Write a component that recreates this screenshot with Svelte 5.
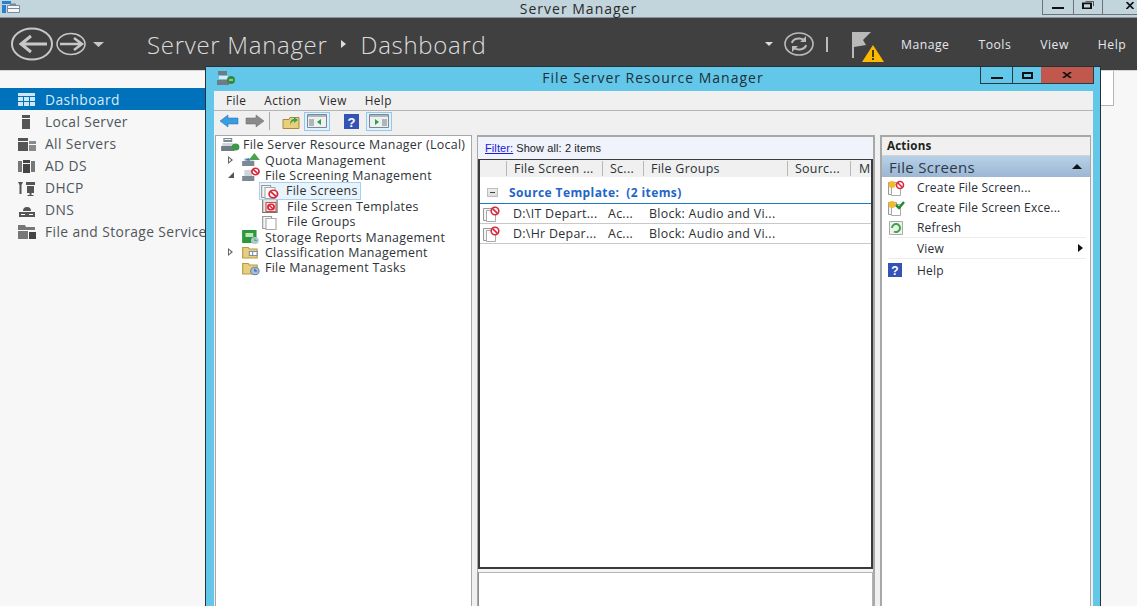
<script>
  const nav = [
    { label: 'Dashboard', icon: 'dash', active: true },
    { label: 'Local Server', icon: 'local' },
    { label: 'All Servers', icon: 'all' },
    { label: 'AD DS', icon: 'adds' },
    { label: 'DHCP', icon: 'dhcp' },
    { label: 'DNS', icon: 'dns' },
    { label: 'File and Storage Services', icon: 'files' }
  ];
  const topMenu = ['Manage', 'Tools', 'View', 'Help'];
  const cols = [
    { label: '', w: 27 },
    { label: 'File Screen ...', w: 96 },
    { label: 'Sc...', w: 41 },
    { label: 'File Groups', w: 144 },
    { label: 'Sourc...', w: 63 },
    { label: 'M', w: 22 }
  ];
  const rows = [
    { a: 'D:\\IT Depart...', b: 'Ac...', c: 'Block: Audio and Vi...' },
    { a: 'D:\\Hr Depar...', b: 'Ac...', c: 'Block: Audio and Vi...' }
  ];
</script>

{#snippet navIcon(k)}
  <svg class="navicon" viewBox="0 0 20 16" width="20" height="16">
    {#if k === 'dash'}
      <path fill="#cfe6f6" d="M1 1h17v3H1zM1 5h5v4H1zM7 5h5v4H7zM13 5h5v4h-5zM1 10h5v4H1zM7 10h5v4H7zM13 10h5v4h-5z" />
    {:else if k === 'local'}
      <path fill="#555" d="M5 1h8v3H5zM5 5h8v10H5z" />
    {:else if k === 'all'}
      <path fill="#555" d="M1 2h10v3H1zM1 6h10v9H1z" /><path fill="#8a8a8a" d="M12 5h7v3h-7zM12 9h7v6h-7z" />
    {:else if k === 'adds'}
      <path fill="#777" d="M1 3h4v11H1zM14 3h4v11h-4z" /><path fill="#444" d="M6 2h7v3H6zM6 6h7v9H6z" />
    {:else if k === 'dhcp'}
      <path fill="#555" d="M1 2h5l-1.500 3v9h-2V5zM9 2h9v3H9zM10 6h7v7h-7zM12.500 13h2v2h2v1h-6v-1h2z" />
    {:else if k === 'dns'}
      <path fill="#555" d="M2 10h16v5H2zM6 9a4 4 0 1 1 8 0z" /><path fill="#fff" d="M4 12h4v1H4zM12 12h4v1h-4z" />
    {:else}
      <path fill="#777" d="M1 1h7l1 2h9v3H1z" /><path fill="#777" d="M1 7h10v8H1z" /><path fill="#444" d="M12 8h7v7h-7z" />
    {/if}
  </svg>
{/snippet}

{#snippet blockBadge(x, y, r)}
  <circle cx={x} cy={y} {r} fill="#fff" stroke="#d8283a" stroke-width="1.600" />
  <path d="M{x - r * 0.7} {y - r * 0.7}L{x + r * 0.7} {y + r * 0.7}" stroke="#d8283a" stroke-width="1.600" />
{/snippet}

{#snippet pages()}
  <path d="M1.500 2.500h8v12h-8z" fill="#f4f4f4" stroke="#999" />
  <path d="M4.500 4.500h9v11h-9z" fill="#fff" stroke="#aaa" />
{/snippet}

{#snippet treeIcon(k)}
  <svg class="ti" viewBox="0 0 18 16" width="20" height="16" preserveAspectRatio="none">
    {#if k === 'root'}
      <path fill="#7d8a94" d="M3 1h8v4H3z" /><path fill="#e8edf0" d="M4 2h6v1H4z" /><path fill="#6f7b85" d="M1 9h12v5H1z" /><path fill="#cfd6db" d="M2 6h10v3H2z" /><circle cx="14" cy="10" r="3.500" fill="#3b9a48" />
    {:else if k === 'quota'}
      <path fill="#7d8a94" d="M1 9h11v5H1z" /><path fill="#cfd6db" d="M3 6h8v3H3z" /><path fill="#4aa24f" d="M12 1l5 7H7z" /><path fill="#3f78b8" d="M3 8l4-2 1 3z" />
    {:else if k === 'screen'}
      <path fill="#7d8a94" d="M1 9h11v5H1z" /><path fill="#cfd6db" d="M3 3h7v6H3z" />
      {@render blockBadge(13, 4.500, 3.200)}
    {:else if k === 'screens'}
      {@render pages()}
      {@render blockBadge(12, 11, 3.800)}
    {:else if k === 'templates'}
      <path d="M1.500 1.500h13v13h-13z" fill="#e6e6e6" stroke="#777" /><path d="M4.500 4.500h9v9h-9z" fill="#fbe4e4" stroke="#b55" />
      {@render blockBadge(9, 9, 2.800)}
    {:else if k === 'groups'}
      {@render pages()}
    {:else if k === 'reports'}
      <path fill="#2c9a3a" d="M1 1h13v13H1z" /><path fill="#bfe6b8" d="M4 4h7v4H4z" /><circle cx="12.500" cy="11.500" r="3.500" fill="#b8c4d4" /><path d="M12.500 9.500v2h2" stroke="#2c5" fill="none" />
    {:else if k === 'class'}
      <path fill="#e7cf7e" stroke="#b89a45" d="M1.500 3.500h5l1 1.500h7v9h-13z" /><path fill="#7d8fa8" d="M7 7h8v5H7z" /><path fill="#fff" d="M8 8h2v3H8zM11 8h3v3h-3z" />
    {:else}
      <path fill="#e7cf7e" stroke="#b89a45" d="M1.500 3.500h5l1 1.500h7v9h-13z" /><circle cx="12.500" cy="11" r="3.800" fill="#a9bdd6" stroke="#6b86a8" /><path d="M12.500 8.800v2.200h2" stroke="#2c5f9e" fill="none" />
    {/if}
  </svg>
{/snippet}

{#snippet fileBlock()}
  <svg viewBox="0 0 20 16" width="20" height="16">
    {@render pages()}
    {@render blockBadge(13, 5, 3.800)}
  </svg>
{/snippet}

<div class="desktop">
  <header class="wintitle">
    <svg class="appicon" viewBox="0 0 20 14" width="20" height="14">
      <path fill="#2b7fd0" d="M1 1h9v3H1zM1 5h4v8H1z" />
      <path fill="#f4f7f9" stroke="#7b8a96" d="M6.500 5.500h12v7h-12z" />
      <path fill="#7b8a96" d="M9 3.500h6v2H9zM6 8h13v1H6z" />
    </svg>
    <span class="wintitle-text">Server Manager</span>
    <div class="wincontrols">
      <span class="wc w1"><i class="min"></i></span>
      <span class="wc w2"><svg viewBox="0 0 12 10" width="12" height="8" preserveAspectRatio="none"><path d="M3.500.500h8v6" fill="none" stroke="#444" /><path d="M1 3h8v6H1z" fill="none" stroke="#111" stroke-width="2" /></svg></span>
      <span class="wc w3"><svg viewBox="0 0 10 8" width="10" height="7"><path d="M1 0l8 8M9 0L1 8" stroke="#111" stroke-width="2" /></svg></span>
    </div>
  </header>

  <div class="darkbar">
    <svg class="navarrows" viewBox="0 0 106 40" width="106" height="40">
      <g fill="none" stroke="#c8c8c8">
        <ellipse cx="21" cy="20" rx="20" ry="15.500" stroke-width="2" />
        <path d="M36 20H10M20 12l-10 8 10 8" stroke-width="3" />
        <ellipse cx="60" cy="20" rx="14" ry="10.500" stroke-width="1.500" />
        <path d="M49 20h21M63 14l8 6-8 6" stroke-width="2.500" />
      </g>
      <path fill="#c8c8c8" d="M82 18h11l-5.500 5z" />
    </svg>
    <div class="crumb"><span>Server Manager</span><i class="crumbarrow"></i><span>Dashboard</span></div>
    <div class="spacer"></div>
    <i class="drop"></i>
    <svg class="refresh" viewBox="0 0 30 24" width="30" height="24">
      <ellipse cx="15" cy="12" rx="14" ry="11" fill="none" stroke="#bbb" stroke-width="1.600" />
      <path d="M8 11a7 5 0 0 1 12-3M22 13a7 5 0 0 1-12 3" fill="none" stroke="#bbb" stroke-width="2" />
      <path fill="#bbb" d="M22 4v6h-6zM8 20v-6h6z" />
    </svg>
    <i class="pipe"></i>
    <svg class="flag" viewBox="0 0 32 30" width="32" height="30">
      <path fill="#b9b9b9" d="M0 0h2v26H0zM2 0h17l-8 8 3 5-12 2z" />
      <path fill="#fbb900" d="M21 13l11 17H10z" />
      <path fill="#4a3a00" d="M20 18h2v7h-2zM20 26h2v2h-2z" />
    </svg>
    <nav class="topmenu">
      {#each topMenu as m}<span>{m}</span>{/each}
    </nav>
  </div>

  <div class="body">
    <aside class="side">
      <ul>
        {#each nav as n}
          <li class:active={n.active}>{@render navIcon(n.icon)}<span>{n.label}</span></li>
        {/each}
      </ul>
    </aside>
    <main class="content"><div class="tile"></div></main>
  </div>

  <section class="fsrm">
    <div class="fs-title">
      <svg class="fs-icon" viewBox="0 0 20 16" width="20" height="16">
        <path fill="#6f7b85" d="M2 1h9v4H2zM1 10h12v5H1z" /><path fill="#e2e7ea" d="M3 6h9v3H3z" /><circle cx="15" cy="10" r="4" fill="#37883f" /><path d="M13 10h4" stroke="#dff" />
      </svg>
      <span class="fs-title-text">File Server Resource Manager</span>
      <div class="fs-ctl">
        <span class="c1"><i class="min"></i></span>
        <span class="c2"><i class="max"></i></span>
        <span class="c3"><svg viewBox="0 0 10 8" width="10" height="6" preserveAspectRatio="none"><path d="M1 0l8 8M9 0L1 8" stroke="#111" stroke-width="2" /></svg></span>
      </div>
    </div>

    <div class="fs-inner">
      <div class="menubar">
        <span>File</span><span>Action</span><span>View</span><span>Help</span>
      </div>
      <div class="toolbar">
        <svg class="tb" viewBox="0 0 20 14" width="20" height="14"><path fill="#3a9be0" stroke="#1f6fb0" stroke-width=".5" d="M1 7l8-6v3h10v6H9v3z" /></svg>
        <svg class="tb" viewBox="0 0 20 14" width="20" height="14"><path fill="#8a8a8a" stroke="#666" stroke-width=".5" d="M19 7l-8-6v3H1v6h10v3z" /></svg>
        <i class="tbsep"></i>
        <svg class="tb up" viewBox="0 0 18 15" width="18" height="15"><path fill="#e9cf7c" stroke="#a98a3b" d="M1 5.500h6l1-2h9v11H1z" /><path fill="#3aa24a" d="M8 11c0-4 2-6 4-6V3l4 3-4 3V7c-1 0-3 1-4 4z" /></svg>
        <span class="tbtn"><svg viewBox="0 0 20 14" width="20" height="14"><path fill="#eef1f3" stroke="#7d8790" d="M.500 .500h19v13H.500z" /><path fill="#aeb6bc" d="M1 1h18v2H1zM2 5h5v7H2z" /><path fill="#2f9e44" d="M14 5v6l-4-3z" /></svg></span>
        <svg class="tb help" viewBox="0 0 15 15" width="15" height="15"><path fill="#3553b5" d="M0 0h15v15H0z" /><text x="7.500" y="12.500" text-anchor="middle" fill="#fff" font-size="13" font-family="Liberation Sans" font-weight="700">?</text></svg>
        <span class="tbtn"><svg viewBox="0 0 20 14" width="20" height="14"><path fill="#eef1f3" stroke="#7d8790" d="M.500 .500h19v13H.500z" /><path fill="#aeb6bc" d="M1 1h18v2H1zM13 5h5v7h-5z" /><path fill="#2f9e44" d="M6 5v6l4-3z" /></svg></span>
      </div>

      <div class="panes">
        <div class="tree">
          <div class="tn l0">{@render treeIcon('root')}<span>File Server Resource Manager (Local)</span></div>
          <div class="tn l1"><i class="exp closed"></i>{@render treeIcon('quota')}<span>Quota Management</span></div>
          <div class="tn l1"><i class="exp open"></i>{@render treeIcon('screen')}<span>File Screening Management</span></div>
          <div class="tn l2 sel">{@render treeIcon('screens')}<span>File Screens</span></div>
          <div class="tn l2">{@render treeIcon('templates')}<span>File Screen Templates</span></div>
          <div class="tn l2">{@render treeIcon('groups')}<span>File Groups</span></div>
          <div class="tn l1"><i class="exp none"></i>{@render treeIcon('reports')}<span>Storage Reports Management</span></div>
          <div class="tn l1"><i class="exp closed"></i>{@render treeIcon('class')}<span>Classification Management</span></div>
          <div class="tn l1"><i class="exp none"></i>{@render treeIcon('tasks')}<span>File Management Tasks</span></div>
        </div>

        <div class="center">
          <div class="filter"><a href="#top">Filter:</a> <span>Show all: 2 items</span></div>
          <div class="list">
            <div class="thead">
              {#each cols as c}<span class="th" style="width:{c.w}px">{c.label}</span>{/each}
            </div>
            <div class="group"><i class="minus"></i><span>Source Template:&nbsp; (2 items)</span></div>
            {#each rows as r}
              <div class="row">
                <span class="c-ico">{@render fileBlock()}</span>
                <span class="c-a">{r.a}</span>
                <span class="c-b">{r.b}</span>
                <span class="c-c">{r.c}</span>
              </div>
            {/each}
          </div>
          <div class="detail"></div>
        </div>

        <div class="actions">
          <div class="act-head">Actions</div>
          <div class="act-sec"><span>File Screens</span><i class="caret"></i></div>
          <ul>
            <li>
              <svg viewBox="0 0 18 16" width="18" height="16">
                {@render pages()}
                <circle cx="5" cy="4.500" r="3.500" fill="#f5b82e" />
                {@render blockBadge(13, 5, 3.500)}
              </svg>
              <span>Create File Screen...</span>
            </li>
            <li>
              <svg viewBox="0 0 18 16" width="18" height="16">
                {@render pages()}
                <circle cx="5" cy="4.500" r="3.500" fill="#f5b82e" />
                <path d="M9 5l3 3 5-6" stroke="#1e8a2c" stroke-width="2.500" fill="none" />
              </svg>
              <span>Create File Screen Exce...</span>
            </li>
            <li class="ruled">
              <svg viewBox="0 0 18 16" width="18" height="16">
                <path d="M2.500 1.500h13v13h-13z" fill="#eef3ee" stroke="#aaa" />
                <path d="M5 8a4 4 0 1 1 2 3.500" stroke="#39a845" stroke-width="2" fill="none" />
              </svg>
              <span>Refresh</span>
            </li>
            <li class="ruled"><span class="blank"></span><span>View</span><i class="subarrow"></i></li>
            <li>
              <svg viewBox="0 0 18 16" width="18" height="16"><path fill="#3553b5" d="M1 1h14v14H1z" /><text x="8" y="13" text-anchor="middle" fill="#fff" font-size="12" font-family="Liberation Sans" font-weight="700">?</text></svg>
              <span>Help</span>
            </li>
          </ul>
        </div>
      </div>
    </div>
  </section>
</div>

<style>
  :global(body) { margin: 0; background: #f7f7f7; }
  ul { list-style: none; margin: 0; padding: 0; }
  i { display: block; }

  .desktop {
    position: relative;
    width: 1137px;
    height: 606px;
    overflow: hidden;
    display: flex;
    flex-direction: column;
    font-family: "Open Sans", "Noto Sans", sans-serif;
    font-size: 12.400px;
    letter-spacing: .3px;
    color: #333;
    background: #f7f7f7;
  }

  .wintitle {
    flex: 0 0 17px;
    height: 17px;
    background: #c2d5dc;
    border-bottom: 1px solid #8b9599;
    display: flex;
    align-items: center;
    justify-content: center;
    position: relative;
  }
  .appicon { position: absolute; left: 1px; top: 0; }
  .wintitle-text { font-size: 14px; letter-spacing: 1px; color: #2a2a2a; margin-left: 20px; }
  .wincontrols {
    position: absolute;
    right: 0;
    top: 0;
    display: flex;
    height: 14px;
    border-bottom: 1px solid #6c7478;
    border-left: 1px solid #6c7478;
  }
  .wc {
    display: flex;
    align-items: center;
    justify-content: center;
    box-sizing: border-box;
    border-right: 1px solid #6c7478;
    height: 14px;
  }
  .w1 { width: 31px; }
  .w2 { width: 29px; }
  .w3 { width: 34px; border-right: 0; justify-content: flex-end; padding-right: 2px; padding-bottom: 4px; }
  .w2 svg { margin-bottom: 4px; }
  .min { width: 12px; height: 2px; background: #111; margin-top: 1px; }

  .darkbar {
    flex: 0 0 52px;
    background: #404040;
    display: flex;
    align-items: center;
    position: relative;
    color: #e6e6e6;
    box-sizing: border-box;
    padding-left: 11px;
  }
  .navarrows { flex: none; }
  .crumb {
    display: flex;
    align-items: center;
    margin-left: 30px;
    font-size: 24px;
    letter-spacing: .7px;
    color: #dcdcdc;
    font-weight: 300;
  }
  .crumbarrow {
    width: 0;
    height: 0;
    border-left: 5px solid #ddd;
    border-top: 4px solid transparent;
    border-bottom: 4px solid transparent;
    margin: 0 15px 0 13px;
  }
  .spacer { flex: 1; }
  .drop {
    width: 0;
    height: 0;
    border-top: 4px solid #ddd;
    border-left: 4px solid transparent;
    border-right: 4px solid transparent;
    margin-right: 11px;
  }
  .refresh { flex: none; }
  .pipe { width: 2px; height: 15px; background: #bbb; margin: 0 24px 0 12px; }
  .flag { flex: none; margin-top: 6px; }
  .topmenu {
    display: flex;
    font-size: 12.200px;
    letter-spacing: .5px;
    color: #e4e8ee;
    margin-left: 17px;
    width: 236px;
    flex: none;
    gap: 29px;
  }

  .body { flex: 1; display: flex; min-height: 0; }
  .side { width: 206px; background: #f7f7f7; padding-top: 17px; border-top: 1px solid #d5d5d5; flex: none; overflow: hidden; }
  .side li {
    height: 22px;
    box-sizing: border-box;
    padding-top: 1px;
    display: flex;
    align-items: center;
    gap: 8px;
    padding-left: 17px;
    white-space: nowrap;
    color: #50565c;
    font-size: 13.800px;
    letter-spacing: .4px;
  }
  .side li.active { background: #0072bc; color: #d6eaf6; }
  .navicon { flex: none; }
  .content { flex: 1; position: relative; border-top: 1px solid #d5d5d5; }
  .tile { position: absolute; left: 895px; top: 0; width: 12px; height: 34px; background: #fff; border-right: 1px solid #b5b5b5; border-bottom: 1px solid #b5b5b5; }

  .fsrm {
    position: absolute;
    left: 205px;
    top: 66px;
    width: 896px;
    height: 560px;
    box-sizing: border-box;
    background: #63c7ea;
    border: 1px solid #25323a;
    border-bottom: 0;
    display: flex;
    flex-direction: column;
  }
  .fs-title {
    flex: 0 0 24px;
    display: flex;
    align-items: center;
    justify-content: center;
    position: relative;
  }
  .fs-icon { position: absolute; left: 10px; top: 3px; }
  .fs-title-text { font-size: 14px; letter-spacing: 1px; color: #1f2f38; margin-top: -3px; }
  .fs-ctl {
    position: absolute;
    right: 6px;
    top: 0;
    height: 16px;
    display: flex;
    border: 1px solid #2b3a42;
    border-top: 0;
  }
  .fs-ctl span { display: flex; align-items: center; justify-content: center; height: 16px; }
  .fs-ctl .min { margin-top: 5px; }
  .c1 { width: 31px; border-right: 1px solid #2b3a42; }
  .c2 { width: 28px; }
  .c3 { width: 52px; background: #c0584e; }
  .max { width: 7px; height: 3px; border: 2px solid #111; }

  .fs-inner {
    flex: 1;
    margin: 0 7px 0 8px;
    background: #f0f0f0;
    display: flex;
    flex-direction: column;
    min-height: 0;
    color: #2b2b2b;
  }
  .menubar {
    flex: 0 0 20px;
    display: flex;
    align-items: center;
    gap: 18px;
    padding-left: 12px;
    padding-bottom: 2px;
    box-sizing: border-box;
    border-bottom: 1px solid #b4b4b4;
    font-size: 11.800px;
    letter-spacing: .4px;
  }
  .toolbar {
    flex: 0 0 24px;
    box-sizing: border-box;
    padding-bottom: 4px;
    display: flex;
    align-items: center;
    padding-left: 5px;
  }
  .tb { flex: none; }
  .tb + .tb { margin-left: 6px; }
  .tbsep { width: 1px; height: 18px; background: #a9a9a9; margin: 0 12px 0 4px; }
  .up { margin-left: 0; }
  .tbtn {
    width: 24px;
    height: 17px;
    border: 1px solid #90c8f0;
    background: #e3f1fb;
    display: flex;
    align-items: center;
    justify-content: center;
    margin-left: 4px;
  }
  .tb.help { margin-left: 14px; }
  .tb.help + .tbtn { margin-left: 7px; }

  .panes { flex: 1; display: flex; min-height: 0; padding-left: 1px; }
  .tree {
    width: 257px;
    flex: none;
    background: #fff;
    border: 1px solid #a8a8a8;
    border-bottom: 0;
    box-sizing: border-box;
    padding-top: 1px;
    color: #2e3338;
  }
  .tn { height: 15.400px; display: flex; align-items: center; white-space: nowrap; }
  .ti { flex: none; margin-right: 4px; }
  .l0 { padding-left: 4px; }
  .l0 .ti { margin-right: 3px; }
  .l1 { padding-left: 12px; }
  .l2 { padding-left: 45px; }
  .l2 .ti { margin-right: 6px; }
  .tn.sel {
    width: fit-content;
    padding: 0 2px 0 0;
    margin-left: 44px;
    outline: 1px solid #a9d0ee;
    background: #e9f3fb;
  }
  .exp { width: 12px; height: 8px; margin-right: 1px; flex: none; position: relative; }
  .closed::before {
    content: "";
    position: absolute;
    left: 0;
    top: 0;
    border-left: 5px solid #666;
    border-top: 4px solid transparent;
    border-bottom: 4px solid transparent;
  }
  .closed::after {
    content: "";
    position: absolute;
    left: 1px;
    top: 2px;
    border-left: 2.500px solid #fff;
    border-top: 2px solid transparent;
    border-bottom: 2px solid transparent;
  }
  .open::before {
    content: "";
    position: absolute;
    left: 0;
    top: 1px;
    border-right: 6px solid #555;
    border-top: 6px solid transparent;
  }

  .center {
    width: 398px;
    margin-left: 5px;
    flex: none;
    display: flex;
    flex-direction: column;
    min-height: 0;
    border: 1px solid #a8a8a8;
    border-bottom: 0;
    border-right-width: 2px;
    box-sizing: border-box;
    background: #f4f4f4;
  }
  .filter {
    flex: 0 0 23px;
    background: #f0f3fb;
    display: flex;
    align-items: center;
    padding-left: 7px;
    gap: 3px;
    font-family: "Liberation Sans", sans-serif;
    font-size: 11px;
    letter-spacing: .1px;
    color: #222;
    box-sizing: border-box;
    border-top: 1px solid #a8a8a8;
  }
  .filter a { color: #1a1ae0; text-decoration: underline; }
  .list {
    flex: 0 0 410px;
    box-sizing: border-box;
    background: #fff;
    border: 1px solid #3a3a3a;
    border-right-width: 2px;
    border-left-width: 2px;
    border-bottom-width: 2px;
    color: #2b3036;
  }
  .thead { height: 17px; display: flex; background: #f0f0f0; }
  .th {
    flex: none;
    box-sizing: border-box;
    border-right: 1px solid #b8b8b8;
    padding-left: 7px;
    white-space: nowrap;
    line-height: 15px;
    margin: 1px 0;
  }
  .th:last-child { border-right: 0; padding-left: 8px; }
  .group {
    height: 27px;
    display: flex;
    align-items: center;
    color: #1e66c8;
    font-weight: 700;
    border-bottom: 1px solid #1e78c8;
    font-size: 12px;
    letter-spacing: .4px;
    padding-top: 4px;
    box-sizing: border-box;
  }
  .minus {
    width: 9px;
    height: 7px;
    border: 1px solid #bdbdbd;
    background: linear-gradient(#eee, #ddd);
    margin: 0 11px 0 7px;
    position: relative;
  }
  .minus::after { content: ""; position: absolute; left: 2px; right: 2px; top: 3px; height: 1px; background: #444; }
  .row {
    height: 20px;
    box-sizing: border-box;
    display: flex;
    align-items: center;
    border-bottom: 1px solid #c8c8c8;
    white-space: nowrap;
  }
  .c-ico { width: 33px; display: flex; padding-left: 2px; box-sizing: border-box; flex: none; }
  .c-a { width: 95px; flex: none; }
  .c-b { width: 41px; flex: none; }
  .c-c { flex: none; }
  .detail {
    flex: 1;
    margin: 3px 0 0 0;
    background: #fff;
    border: 1px solid #b4b4b4;
    border-bottom: 0;
    border-left-color: #8a8a8a;
  }

  .actions {
    flex: 1;
    margin: 0 2px 0 5px;
    background: #fff;
    border: 1px solid #a8a8a8;
    border-width: 2px 1px 0 2px;
    min-width: 0;
    color: #2b3036;
    font-size: 12px;
    letter-spacing: .2px;
  }
  .act-head {
    height: 18px;
    box-sizing: content-box;
    background: #f0f0f0;
    font-weight: 700;
    font-size: 11.600px;
    color: #222;
    padding-left: 5px;
    line-height: 17px;
    border-bottom: 1px solid #d2d2d2;
  }
  .act-sec {
    height: 21px;
    background: linear-gradient(#b6d1e8, #9db6d3);
    display: flex;
    align-items: center;
    justify-content: space-between;
    padding: 0 8px 0 7px;
    font-size: 15px;
    letter-spacing: .3px;
    color: #2c3a48;
  }
  .caret { width: 0; height: 0; border-bottom: 5px solid #111; border-left: 5px solid transparent; border-right: 5px solid transparent; }
  .actions li {
    height: 20px;
    margin: 0 4px 0 6px;
    padding-top: 1px;
    box-sizing: border-box;
    display: flex;
    align-items: center;
    gap: 12px;
    white-space: nowrap;
    position: relative;
  }
  .actions li svg { flex: none; margin-left: -1px; }
  .actions li.ruled { border-bottom: 1px solid #ececec; height: 21px; }
  .actions li:last-child { height: 21px; }
  .blank { width: 17px; flex: none; }
  .subarrow {
    position: absolute;
    right: 3px;
    top: 6px;
    border-left: 5px solid #111;
    border-top: 4px solid transparent;
    border-bottom: 4px solid transparent;
  }
</style>
